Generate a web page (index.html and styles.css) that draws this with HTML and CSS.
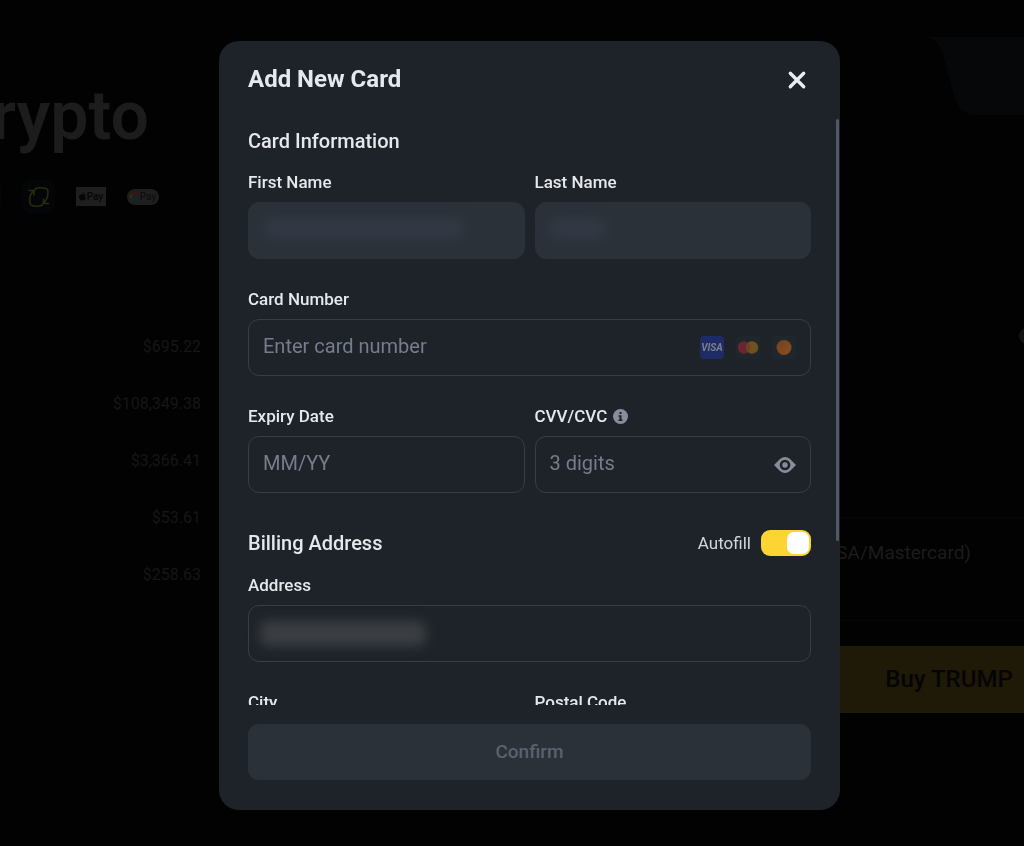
FILE: index.html
```html
<!DOCTYPE html>
<html lang="en">
<head>
  <meta charset="UTF-8">
  <meta name="viewport" content="width=device-width, initial-scale=1.0">
  <title>Add New Card</title>
  <link rel="stylesheet" href="styles.css">
</head>
<body>
  <!-- Page behind the dialog -->
  <div class="page" aria-hidden="true">
    <div class="hero">
      <h1 class="hero-title">Crypto</h1>
      <div class="pay-methods">
        <span class="pay-tile"></span>
        <span class="pay-tile">
          <svg width="22" height="22" viewBox="0 0 22 22" fill="none" stroke="#292c06" stroke-width="1.6">
            <path d="M7.500 4.500V2.500Q12 1 18 2.500Q20 3 20 6Q20 9 19 12L16 17M15.500 12.500V17.500H21"/>
            <path d="M14 17.500V19.500Q9 21 4 19.500Q2 19 1.800 16Q1.500 13 2.500 9L5 5M6 9.500V4.500H.500"/>
          </svg>
        </span>
        <span class="pay-apple">
          <svg width="7" height="9" viewBox="0 0 14 17" fill="#060606">
            <path d="M10 0c0 2-1.500 3.500-3.200 3.600C6.700 2 8.200.3 10 0zM7 4.800c.8 0 1.900-1 3.500-1 1.200 0 2.400.6 3.100 1.700-2.600 1.600-2.200 5 .4 6.100-.6 1.800-2.200 4.700-3.900 4.700-1.100 0-1.600-.7-3-.7s-2 .7-3 .7C2.200 16.300 0 12.500 0 9.300c0-3.300 2-5.400 4.100-5.400C5.300 3.900 6.300 4.800 7 4.800z"/>
          </svg>Pay
        </span>
        <span class="pay-google">
          <svg width="9" height="9" viewBox="0 0 18 18" fill="none" stroke-width="3.400">
            <path d="M15 4.500A7 7 0 0 0 3 5.500" stroke="#45130f"/>
            <path d="M3 5.500a7 7 0 0 0 0 7" stroke="#403005"/>
            <path d="M3 12.500a7 7 0 0 0 10.500 2" stroke="#0a3015"/>
            <path d="M13.500 14.500A7 7 0 0 0 16 9H9" stroke="#0c2248"/>
          </svg>Pay
        </span>
      </div>
      <ul class="prices">
        <li>$695.22</li>
        <li>$108,349.38</li>
        <li>$3,366.41</li>
        <li>$53.61</li>
        <li>$258.63</li>
      </ul>
    </div>

    <div class="trade">
      <svg class="trade-tab" width="328" height="78" viewBox="0 0 328 78">
        <path d="M140 0c10 1 15 6 18 15l12 44c4 12 10 19 22 19h136V0z" fill="#050709"/>
      </svg>
      <span class="trade-dot"></span>
      <div class="trade-method"><p>Card (VISA/Mastercard)</p></div>
      <div class="trade-buy">Buy TRUMP</div>
    </div>
  </div>

  <!-- Add card dialog -->
  <div class="overlay">
    <form class="modal" role="dialog" aria-labelledby="modalTitle">
      <header class="modal-header">
        <h2 id="modalTitle">Add New Card</h2>
        <button type="button" class="close-btn" aria-label="Close">
          <svg width="20" height="20" viewBox="0 0 20 20" stroke="#eaecef" stroke-width="3.400" stroke-linecap="round">
            <path d="M3.300 3.300l13.400 13.400M16.700 3.300L3.300 16.700"/>
          </svg>
        </button>
      </header>

      <div class="modal-scroll">
        <div class="modal-body">
          <h3>Card Information</h3>
          <div class="form-grid">
            <div class="field">
              <label for="firstName">First Name</label>
              <div class="input-wrap">
                <input type="text" id="firstName" disabled>
                <span class="masked masked-first"></span>
              </div>
            </div>
            <div class="field">
              <label for="lastName">Last Name</label>
              <div class="input-wrap">
                <input type="text" id="lastName" disabled>
                <span class="masked masked-last"></span>
              </div>
            </div>
            <div class="field field-wide">
              <label for="cardNumber">Card Number</label>
              <div class="input-wrap">
                <input type="text" id="cardNumber" placeholder="Enter card number">
                <div class="input-end card-brands">
                  <span class="brand brand-visa">VISA</span>
                  <span class="brand">
                    <svg width="24" height="23" viewBox="0 0 24 23">
                      <circle cx="8" cy="11.500" r="6.200" fill="#682630"/>
                      <circle cx="16" cy="11.500" r="6.200" fill="#71521f"/>
                      <path d="M12 6.700a6.200 6.200 0 0 1 0 9.600a6.200 6.200 0 0 1 0-9.600z" fill="#6e3f24"/>
                    </svg>
                  </span>
                  <span class="brand">
                    <svg width="24" height="23" viewBox="0 0 24 23">
                      <defs>
                        <linearGradient id="orb" x1="0" y1="0" x2="1" y2="1">
                          <stop offset="0" stop-color="#75401f"/>
                          <stop offset="1" stop-color="#875020"/>
                        </linearGradient>
                      </defs>
                      <circle cx="12" cy="11.500" r="7.500" fill="url(#orb)"/>
                    </svg>
                  </span>
                </div>
              </div>
            </div>
            <div class="field">
              <label for="expiry">Expiry Date</label>
              <div class="input-wrap">
                <input type="text" id="expiry" placeholder="MM/YY">
              </div>
            </div>
            <div class="field">
              <div class="label-row">
                <label for="cvv">CVV/CVC</label>
                <svg width="15" height="15" viewBox="0 0 15 15">
                  <circle cx="7.500" cy="7.500" r="7.500" fill="#848e9c"/>
                  <path d="M6.500 3h2v2h-2zM5.500 6.200h3v4.300h1V12h-4v-1.500h1V7.700h-1z" fill="#1e2329"/>
                </svg>
              </div>
              <div class="input-wrap">
                <input type="text" id="cvv" placeholder="3 digits">
                <button type="button" class="input-end" aria-label="Show code">
                  <svg width="22" height="16" viewBox="0 0 22 16">
                    <path d="M0 8L6 2Q11-1.800 16 2l6 6-6 6q-5 3.800-10 0z" fill="#848e9c"/>
                    <circle cx="11" cy="8" r="5.300" fill="#1e2329"/>
                    <circle cx="11" cy="8" r="2.700" fill="#848e9c"/>
                  </svg>
                </button>
              </div>
            </div>
          </div>

          <div class="section-row">
            <h3>Billing Address</h3>
            <label class="autofill" for="autofill">Autofill
              <input type="checkbox" id="autofill" class="switch" checked>
            </label>
          </div>
          <div class="form-grid">
            <div class="field field-wide">
              <label for="address">Address</label>
              <div class="input-wrap">
                <input type="text" id="address">
                <span class="masked masked-address"></span>
              </div>
            </div>
            <div class="field">
              <label for="city">City</label>
              <div class="input-wrap">
                <input type="text" id="city">
              </div>
            </div>
            <div class="field">
              <label for="postal">Postal Code</label>
              <div class="input-wrap">
                <input type="text" id="postal">
              </div>
            </div>
          </div>
        </div>
        <span class="scroll-thumb"></span>
      </div>

      <footer class="modal-footer">
        <button type="submit" class="confirm-btn" disabled>Confirm</button>
      </footer>
    </form>
  </div>
</body>
</html>
```
FILE: styles.css
```css
* {
  box-sizing: border-box;
}

body {
  margin: 0;
  height: 100vh;
  overflow: hidden;
  background-color: #020202;
  color: #e6e8eb;
  font-family: Roboto, "Liberation Sans", sans-serif;
}

h1, h2, h3, p, ul {
  margin: 0;
  padding: 0;
}

svg {
  display: block;
}

/* Dimmed page */
.page {
  display: grid;
  grid-template-columns: 201px 1fr 240px;
  height: 100vh;
  overflow: hidden;
  color: #1c1c1c;
}

.hero {
  grid-column: 1;
  display: flex;
  flex-direction: column;
  align-items: flex-end;
  padding-top: 76px;
}

.hero-title {
  margin-right: 52px;
  font-size: 68px;
  line-height: 80px;
  font-weight: 600;
}

.pay-methods {
  display: flex;
  align-items: center;
  gap: 21px;
  margin-right: 42px;
  margin-top: 24px;
}

.pay-tile {
  display: flex;
  align-items: center;
  justify-content: center;
  flex: none;
  width: 33px;
  height: 33px;
  border-radius: 8px;
  background-color: #030508;
}

.pay-apple,
.pay-google {
  display: flex;
  align-items: center;
  justify-content: center;
  gap: 1px;
  flex: none;
  font-size: 10px;
}

.pay-apple {
  width: 30px;
  height: 19px;
  background-color: #1f1f1f;
  color: #060606;
  font-weight: 500;
}

.pay-google {
  width: 32px;
  height: 16px;
  border-radius: 8px;
  background-color: #1f1f1f;
  color: #0b0b0b;
}

.prices {
  margin-top: 105px;
  list-style: none;
  text-align: right;
  font-size: 16px;
  line-height: 57px;
  color: #161616;
}

.trade {
  grid-column: 3;
  padding-top: 37px;
}

.trade-dot {
  display: block;
  width: 16px;
  height: 16px;
  margin: 213px 0 0 235px;
  border-radius: 50%;
  background-color: #141414;
}

.trade-method {
  display: flex;
  justify-content: flex-end;
  height: 104px;
  margin-top: 173px;
  padding: 22px 53px 0 0;
  border-top: 1px solid #060606;
  border-bottom: 1px solid #060606;
  font-size: 19px;
  line-height: 26px;
  white-space: nowrap;
}

.trade-buy {
  width: 330px;
  margin-top: 25px;
  background-color: #1f1907;
  color: #050506;
  font-size: 24px;
  line-height: 67px;
  font-weight: 500;
  text-align: center;
}

/* Dialog */
.overlay {
  position: fixed;
  inset: 0;
  display: flex;
  align-items: center;
  justify-content: center;
  padding: 5px 0 0 35px;
}

.modal {
  display: flex;
  flex-direction: column;
  width: 100%;
  max-width: 621px;
  height: calc(100vh - 77px);
  border-radius: 20px;
  background-color: #1e2329;
  overflow: hidden;
}

.modal-header {
  display: flex;
  align-items: center;
  justify-content: space-between;
  flex: none;
  height: 78px;
  padding: 0 33px 2px 29px;
}

h2 {
  font-size: 24px;
  line-height: 32px;
  font-weight: 700;
}

h3 {
  font-size: 20px;
  line-height: 24px;
  font-weight: 500;
}

button {
  padding: 0;
  border: none;
  background: none;
  font-family: inherit;
  cursor: pointer;
}

.close-btn {
  padding-top: 2px;
}

.modal-scroll {
  position: relative;
  flex: 1;
  min-height: 0;
}

.modal-body {
  height: 100%;
  padding: 10px 29px;
  overflow-y: auto;
  scrollbar-width: none;
}

.scroll-thumb {
  position: absolute;
  top: 0;
  right: 1px;
  width: 3px;
  height: 72%;
  border-radius: 2px;
  background-color: #4f5865;
}

.form-grid {
  display: grid;
  grid-template-columns: 1fr 1fr;
  gap: 30px 10px;
  margin-top: 19px;
}

.field-wide {
  grid-column: span 2;
}

.field label {
  display: block;
  font-size: 17px;
  line-height: 20px;
  font-weight: 500;
}

.label-row {
  display: flex;
  align-items: center;
  gap: 6px;
}

.input-wrap {
  position: relative;
  margin-top: 10px;
}

input[type="text"] {
  display: block;
  width: 100%;
  height: 57px;
  padding: 0 14px 3px;
  border: 1px solid #383d47;
  border-radius: 11px;
  background: none;
  color: #eaecef;
  font-family: inherit;
  font-size: 20px;
}

input[type="text"]::placeholder {
  color: #757d8d;
}

input[type="text"]:disabled {
  border-color: #2b3139;
  background-color: #2b3139;
}

.input-end {
  position: absolute;
  top: 0;
  bottom: 0;
  right: 15px;
  display: flex;
  align-items: center;
}

.card-brands {
  gap: 12px;
}

.brand {
  width: 24px;
  height: 23px;
  border-radius: 4px;
  background-color: #1f272d;
}

.brand-visa {
  background-color: #1f2b66;
  color: #7c8088;
  font-size: 10px;
  line-height: 23px;
  font-weight: 700;
  font-style: italic;
  text-align: center;
}

/* Blurred-out personal details */
.masked {
  position: absolute;
  border-radius: 8px;
  filter: blur(6px);
}

.masked-first {
  top: 16px;
  left: 16px;
  width: 200px;
  height: 21px;
  background-color: #323945;
}

.masked-last {
  top: 16px;
  left: 14px;
  width: 56px;
  height: 21px;
  background-color: #323945;
}

.masked-address {
  top: 16px;
  left: 12px;
  width: 166px;
  height: 25px;
  background-color: #3b3f43;
}

.section-row {
  display: flex;
  align-items: center;
  justify-content: space-between;
  margin-top: 37px;
}

.autofill {
  display: flex;
  align-items: center;
  gap: 10px;
  font-size: 17px;
  line-height: 26px;
  color: #d3d6db;
}

.switch {
  appearance: none;
  display: flex;
  justify-content: flex-end;
  width: 50px;
  height: 26px;
  margin: 0;
  padding: 2px;
  border-radius: 9px;
  background-color: #fcd535;
  cursor: pointer;
}

.switch::before {
  content: "";
  width: 22px;
  height: 22px;
  border-radius: 7px;
  background-color: #fff;
}

.switch:not(:checked) {
  justify-content: flex-start;
  background-color: #474d57;
}

.modal-footer {
  flex: none;
  padding: 19px 29px 30px;
}

.confirm-btn {
  width: 100%;
  height: 56px;
  padding-bottom: 2px;
  border-radius: 11px;
  background-color: #2b3139;
  color: #5a6270;
  font-size: 19px;
  font-weight: 500;
}
```
